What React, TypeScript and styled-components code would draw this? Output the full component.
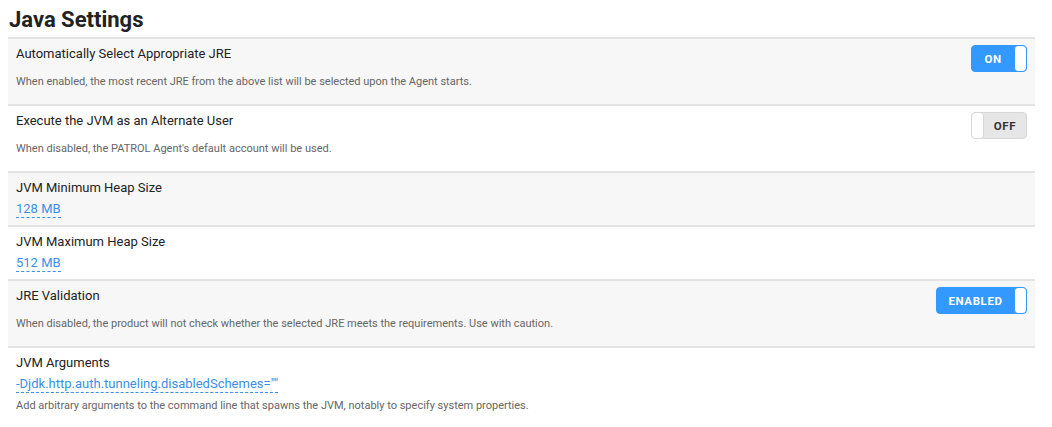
import React from "react";
import styled, { createGlobalStyle } from "styled-components";

const GlobalStyle = createGlobalStyle`
  body {
    margin: 0;
    background: #ffffff;
    font-family: Roboto, "Liberation Sans", Arial, sans-serif;
    color: #222;
  }
`;

type Setting = {
  label: string;
  description?: string;
  value?: string;
  toggle?: { on: boolean; text: string; width: number };
  shaded: boolean;
};

const settings: Setting[] = [
  {
    label: "Automatically Select Appropriate JRE",
    description: "When enabled, the most recent JRE from the above list will be selected upon the Agent starts.",
    toggle: { on: true, text: "ON", width: 56 },
    shaded: true,
  },
  {
    label: "Execute the JVM as an Alternate User",
    description: "When disabled, the PATROL Agent's default account will be used.",
    toggle: { on: false, text: "OFF", width: 56 },
    shaded: false,
  },
  { label: "JVM Minimum Heap Size", value: "128 MB", shaded: true },
  { label: "JVM Maximum Heap Size", value: "512 MB", shaded: false },
  {
    label: "JRE Validation",
    description: "When disabled, the product will not check whether the selected JRE meets the requirements. Use with caution.",
    toggle: { on: true, text: "ENABLED", width: 91 },
    shaded: true,
  },
  {
    label: "JVM Arguments",
    value: '-Djdk.http.auth.tunneling.disabledSchemes=""',
    description: "Add arbitrary arguments to the command line that spawns the JVM, notably to specify system properties.",
    shaded: false,
  },
];

export default function App() {
  return (
    <>
      <GlobalStyle />
      <Page>
        <Title>Java Settings</Title>
        <List>
          {settings.map((s) => (
            <Row key={s.label} $shaded={s.shaded} $hasToggle={!!s.toggle}>
              <Text>
                <Label>{s.label}</Label>
                {s.value && <Value>{s.value}</Value>}
                {s.description && <Description $afterValue={!!s.value}>{s.description}</Description>}
              </Text>
              {s.toggle && (
                <Toggle $on={s.toggle.on} $width={s.toggle.width}>
                  {!s.toggle.on && <Knob $on={false} />}
                  <ToggleText $on={s.toggle.on}>{s.toggle.text}</ToggleText>
                  {s.toggle.on && <Knob $on />}
                </Toggle>
              )}
            </Row>
          ))}
        </List>
      </Page>
    </>
  );
}

const Page = styled.div`
  padding: 8px 17px 0 8px;
`;

const Title = styled.h1`
  margin: 0 0 6px 1px;
  font-size: 22px;
  line-height: 23px;
  font-weight: 700;
  color: #222;
`;

const List = styled.div`
  display: flex;
  flex-direction: column;
`;

const Row = styled.div<{ $shaded: boolean; $hasToggle: boolean }>`
  display: flex;
  justify-content: space-between;
  align-items: flex-start;
  border-top: 2px solid #e3e3e3;
  background: ${({ $shaded }) => ($shaded ? "#f7f7f7" : "#ffffff")};
  padding: ${({ $hasToggle }) => ($hasToggle ? "6px 8px 15px 8px" : "6px 8px 7px 8px")};
`;

const Text = styled.div`
  display: flex;
  flex-direction: column;
  align-items: flex-start;
`;

const Label = styled.div`
  font-size: 13px;
  line-height: 18px;
  color: #222;
`;

const Value = styled.span`
  margin-top: 4px;
  font-size: 13px;
  line-height: 16px;
  color: #3b8fe8;
  border-bottom: 1px dashed #3b8fe8;
`;

const Description = styled.div<{ $afterValue: boolean }>`
  margin-top: ${({ $afterValue }) => ($afterValue ? "6px" : "12px")};
  font-size: 11px;
  line-height: 14px;
  color: #666;
`;

const Toggle = styled.div<{ $on: boolean; $width: number }>`
  display: flex;
  align-items: stretch;
  box-sizing: border-box;
  width: ${({ $width }) => $width}px;
  height: 27px;
  border-radius: 4px;
  border: 1px solid ${({ $on }) => ($on ? "#3399ff" : "#d8d8d8")};
  background: ${({ $on }) => ($on ? "#3399ff" : "#e6e6e6")};
  overflow: hidden;
`;

const ToggleText = styled.span<{ $on: boolean }>`
  flex: 1;
  display: flex;
  align-items: center;
  justify-content: center;
  font-size: 11.5px;
  font-weight: 700;
  letter-spacing: 0.6px;
  color: ${({ $on }) => ($on ? "#ffffff" : "#333333")};
`;

const Knob = styled.span<{ $on: boolean }>`
  width: 11px;
  background: #ffffff;
  border-radius: 4px;
  border: 1px solid ${({ $on }) => ($on ? "#3399ff" : "#d8d8d8")};
  margin: ${({ $on }) => ($on ? "-1px -1px -1px 0" : "-1px 0 -1px -1px")};
`;
